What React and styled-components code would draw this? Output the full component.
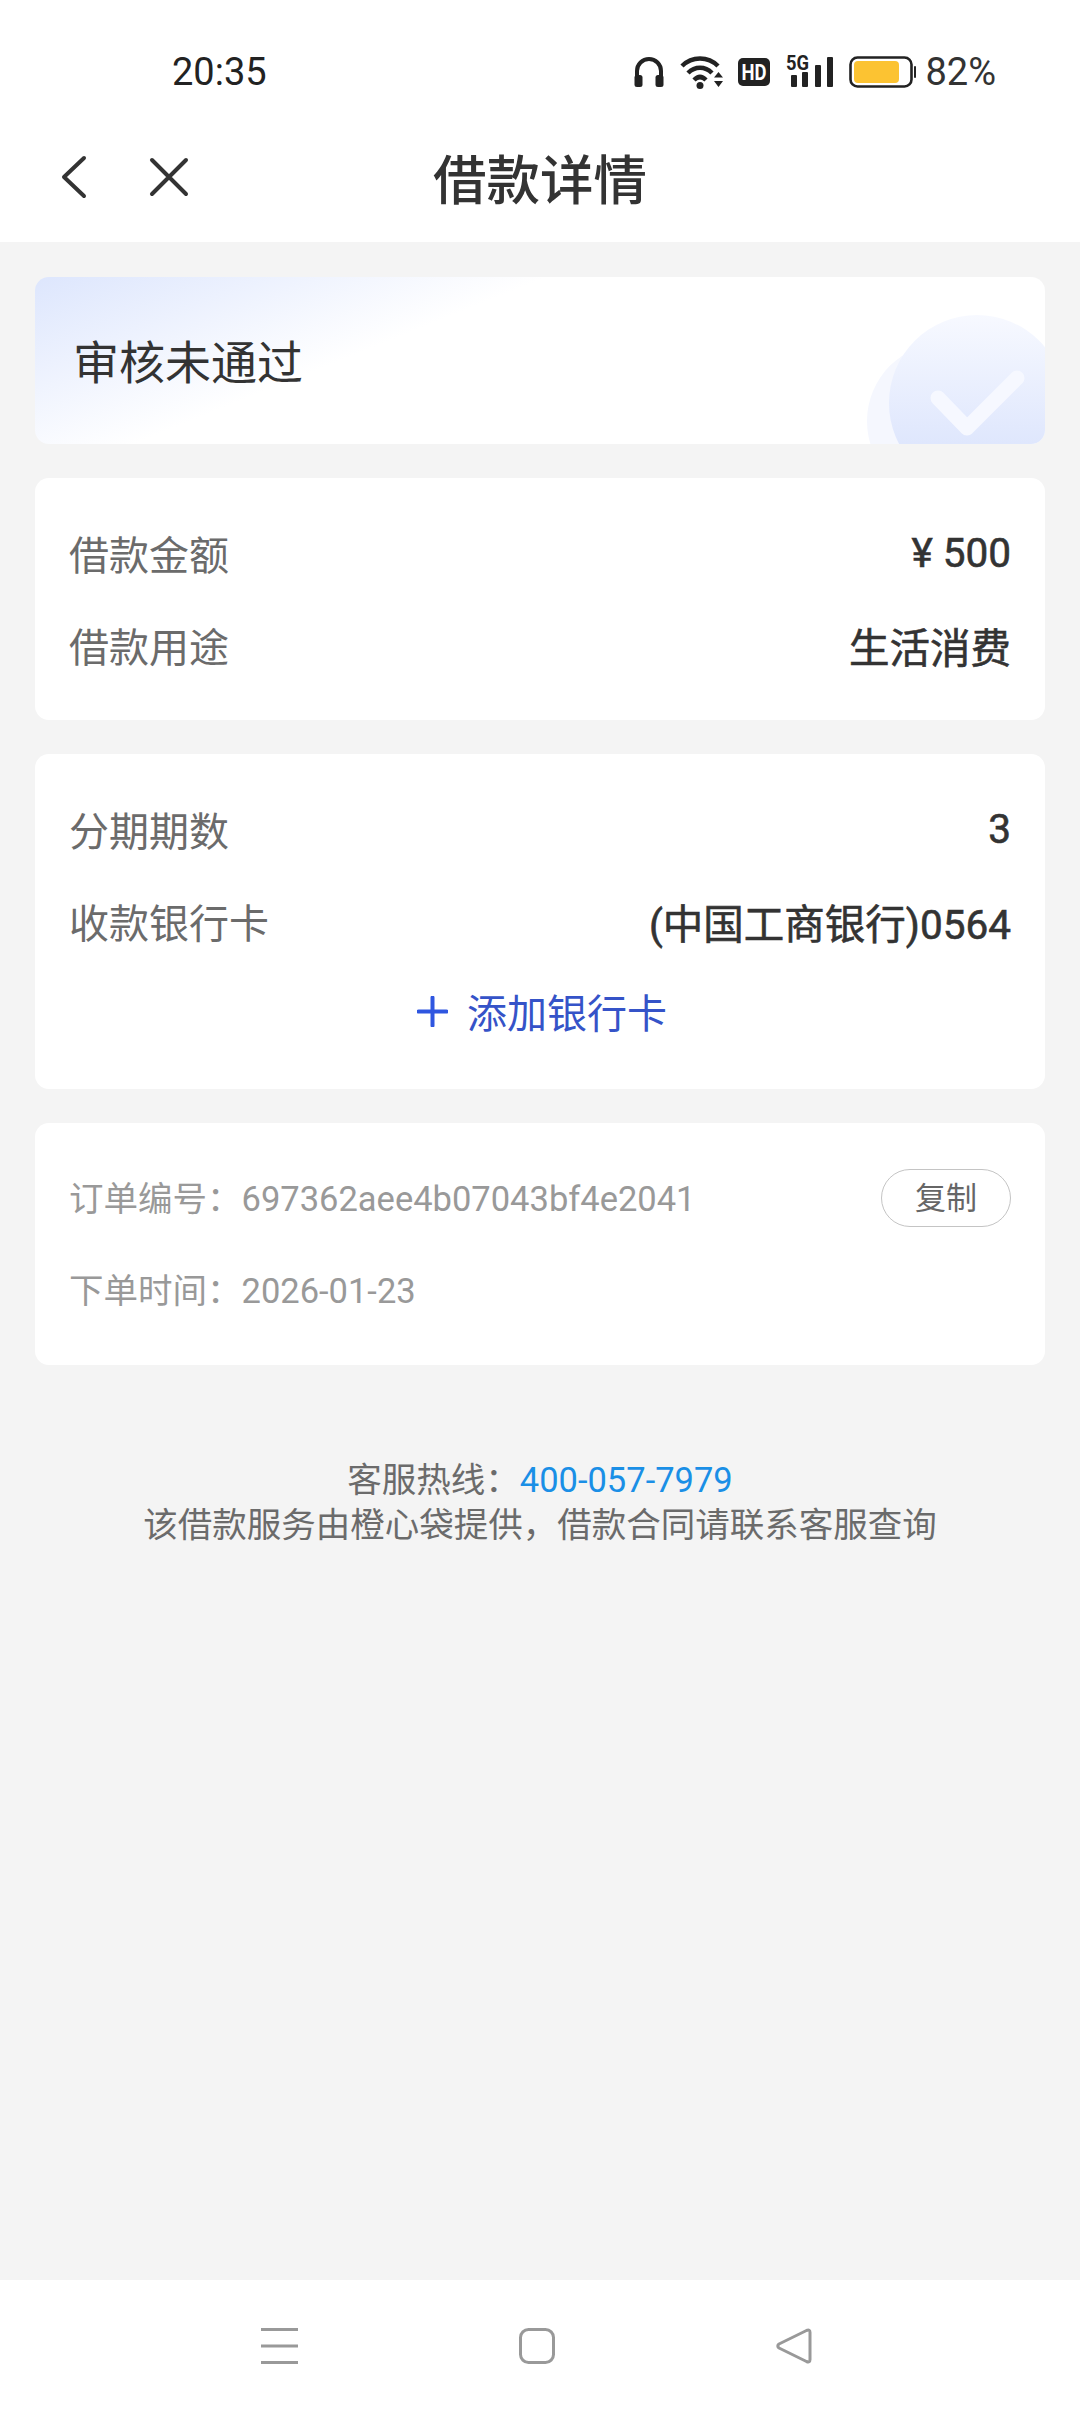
import styled, { createGlobalStyle } from 'styled-components';

const GlobalStyle = createGlobalStyle`
  html, body {
    margin: 0;
    padding: 0;
    background: #f4f4f4;
  }
  * {
    box-sizing: border-box;
  }
`;

const fontStack = `Roboto, "Noto Sans CJK SC", sans-serif`;

const Page = styled.div`
  width: 1080px;
  height: 2412px;
  display: flex;
  flex-direction: column;
  background: #f4f4f4;
  font-family: ${fontStack};
  overflow: hidden;
`;

const StatusBar = styled.div`
  height: 116px;
  padding: 28px 84px 0 172px;
  display: flex;
  align-items: center;
  justify-content: space-between;
  background: #fff;
  color: #222;
`;

const Time = styled.span`
  font-size: 38px;
  font-weight: 400;
`;

const StatusIcons = styled.div`
  display: flex;
  align-items: center;
  gap: 14px;
`;

const Percent = styled.span`
  margin-left: -5px;
  font-size: 38px;
  color: #333;
`;

const NavBar = styled.div`
  height: 126px;
  padding: 0 0 4px 0;
  display: grid;
  grid-template-columns: 1fr auto 1fr;
  align-items: center;
  background: #fff;
`;

const NavActions = styled.div`
  display: flex;
  align-items: center;
  gap: 62px;
  padding-left: 60px;
`;

const Title = styled.div`
  padding-bottom: 2px;
  font-size: 53.5px;
  font-weight: 500;
  color: #333;
`;

const Content = styled.main`
  flex: 1;
  padding: 35px 35px 0;
  display: flex;
  flex-direction: column;
  gap: 34px;
`;

const Banner = styled.section`
  position: relative;
  height: 167px;
  padding: 0 0 3px 38px;
  display: flex;
  align-items: center;
  border-radius: 14px;
  overflow: hidden;
  font-size: 46px;
  color: #333;
  background: linear-gradient(158deg, #dde6fd 0%, #ffffff 36%);
`;

const BannerArt = styled.svg`
  position: absolute;
  right: 0;
  bottom: 0;
`;

const Card = styled.section`
  padding: ${(p) => p.$padding};
  border-radius: 14px;
  background: #fff;
`;

const Row = styled.div`
  height: 92px;
  display: flex;
  align-items: center;
  justify-content: space-between;
`;

const Label = styled.span`
  padding-bottom: 6px;
  font-size: 40px;
  color: #6b6b6b;
`;

const Value = styled.span`
  padding-bottom: 6px;
  font-size: 40.5px;
  font-weight: 400;
  color: #333;
  -webkit-text-stroke: 0.6px #333;
`;

const AddCard = styled.div`
  height: 86px;
  padding: 0 0 4px 4px;
  display: flex;
  align-items: center;
  justify-content: center;
  gap: 19px;
  font-size: 40px;
  color: #3553c8;
`;

const OrderText = styled.span`
  padding-bottom: 4px;
  font-size: 34.5px;
  color: #999;
`;

const CopyButton = styled.button`
  width: 130px;
  height: 58px;
  padding: 0 0 5px;
  border: 1px solid #c4c4c4;
  border-radius: 29px;
  background: #fff;
  font-family: inherit;
  font-size: 31px;
  color: #666;
`;

const Footer = styled.div`
  margin-top: 59px;
  text-align: center;
  font-size: 34.5px;
  line-height: 45px;
  color: #6b6b6b;
`;

const Phone = styled.span`
  color: #1a8fe6;
`;

const BottomNav = styled.nav`
  height: 132px;
  padding: 48px 0 0 261px;
  display: flex;
  align-items: flex-start;
  gap: 221px;
  background: #fff;
`;

const Headphones = () => (
  <svg width="30" height="30" viewBox="0 0 30 30">
    <path d="M3 20V14a12 12 0 0 1 24 0v6" fill="none" stroke="#222" strokeWidth="4" />
    <rect x="0.5" y="18" width="8" height="12" rx="2.5" fill="#222" />
    <rect x="21.5" y="18" width="8" height="12" rx="2.5" fill="#222" />
  </svg>
);

const Wifi = () => (
  <svg width="46" height="36" viewBox="0 0 46 36">
    <g fill="none" stroke="#222" strokeWidth="4.5">
      <path d="M4 12C14 2 30 2 40 12" />
      <path d="M10 19C17 12 27 12 34 19" />
      <path d="M16 26C20 22 24 22 28 26" />
    </g>
    <circle cx="22" cy="31.5" r="3.5" fill="#222" />
    <path d="M36 23.5 40.5 18 45 23.5ZM36 27 45 27 40.5 33Z" fill="#222" />
  </svg>
);

const HdBadge = () => (
  <svg width="32" height="28" viewBox="0 0 32 28">
    <rect width="32" height="28" rx="5" fill="#222" />
    <text x="16" y="22" textAnchor="middle" fontFamily="Roboto, sans-serif" fontWeight="700" fontSize="22" textLength="25" lengthAdjust="spacingAndGlyphs" fill="#fff">
      HD
    </text>
  </svg>
);

const Signal = () => (
  <svg width="49" height="40" viewBox="0 0 49 40">
    <text x="2" y="18" fontFamily="Roboto, sans-serif" fontWeight="700" fontSize="20" textLength="23" lengthAdjust="spacingAndGlyphs" fill="#222">
      5G
    </text>
    <g fill="#222">
      <rect x="7" y="23" width="6" height="12" rx="1" />
      <rect x="18" y="20" width="6" height="15" rx="1" />
      <rect x="31" y="13" width="6" height="22" rx="1" />
      <rect x="43" y="5" width="6" height="30" rx="1" />
    </g>
  </svg>
);

const Battery = () => (
  <svg width="69" height="32" viewBox="0 0 69 32">
    <rect x="3.5" y="1.5" width="61" height="29" rx="7" fill="none" stroke="#222" strokeWidth="2.6" />
    <rect x="7" y="5" width="45" height="22" rx="4" fill="#fcc332" />
    <rect x="67" y="10" width="2" height="12" rx="1" fill="#222" />
  </svg>
);

const BackIcon = () => (
  <svg width="27" height="44" viewBox="0 0 27 44">
    <path d="M24 3 4 22 24 41" fill="none" stroke="#333" strokeWidth="4" strokeLinecap="round" strokeLinejoin="round" />
  </svg>
);

const CloseIcon = () => (
  <svg width="40" height="40" viewBox="0 0 40 40">
    <path d="M3 3 37 37M37 3 3 37" fill="none" stroke="#333" strokeWidth="4" strokeLinecap="round" />
  </svg>
);

const PlusIcon = () => (
  <svg width="31" height="31" viewBox="0 0 31 31">
    <path d="M1.5 15.5H29.5M15.5 1.5V29.5" fill="none" stroke="#2f56e0" strokeWidth="4" strokeLinecap="round" />
  </svg>
);

const MenuIcon = () => (
  <svg width="37" height="36" viewBox="0 0 37 36">
    <path d="M0 1.5H37M0 18H37M0 34.5H37" fill="none" stroke="#999" strokeWidth="3" />
  </svg>
);

const SquareIcon = () => (
  <svg width="36" height="36" viewBox="0 0 36 36">
    <rect x="1.5" y="1.5" width="33" height="33" rx="8" fill="none" stroke="#999" strokeWidth="3" />
  </svg>
);

const TriangleIcon = () => (
  <svg width="36" height="36" viewBox="0 0 36 36">
    <path d="M30.5 2.5Q34 1 34 4.5V31.5Q34 35 30.5 33.5L3 20Q0.5 18 3 16Z" fill="none" stroke="#999" strokeWidth="3" strokeLinejoin="round" />
  </svg>
);

export default function App() {
  return (
    <Page>
      <GlobalStyle />
      <StatusBar>
        <Time>20:35</Time>
        <StatusIcons>
          <Headphones />
          <Wifi />
          <HdBadge />
          <Signal />
          <Battery />
          <Percent>82%</Percent>
        </StatusIcons>
      </StatusBar>

      <NavBar>
        <NavActions>
          <BackIcon />
          <CloseIcon />
        </NavActions>
        <Title>借款详情</Title>
      </NavBar>

      <Content>
        <Banner>
          审核未通过
          <BannerArt width="200" height="167" viewBox="0 0 200 167">
            <defs>
              <linearGradient id="badge" x1="0" y1="0" x2="0" y2="1">
                <stop offset="0" stopColor="#f7f9ff" />
                <stop offset="1" stopColor="#d6e0fc" />
              </linearGradient>
            </defs>
            <circle cx="100" cy="144" r="78" fill="#f5f7fe" />
            <circle cx="132" cy="126" r="88" fill="url(#badge)" />
            <path d="M93 121 122 151 172 101" fill="none" stroke="#f6f8ff" strokeWidth="15" strokeLinecap="round" strokeLinejoin="round" />
          </BannerArt>
        </Banner>

        <Card $padding="32px 34px 26px 34px">
          <Row>
            <Label>借款金额</Label>
            <Value>¥ 500</Value>
          </Row>
          <Row>
            <Label>借款用途</Label>
            <Value>生活消费</Value>
          </Row>
        </Card>

        <Card $padding="32px 34px 33px 34px">
          <Row>
            <Label>分期期数</Label>
            <Value>3</Value>
          </Row>
          <Row>
            <Label>收款银行卡</Label>
            <Value>(中国工商银行)0564</Value>
          </Row>
          <AddCard>
            <PlusIcon />
            添加银行卡
          </AddCard>
        </Card>

        <Card $padding="29px 34px 29px 34px">
          <Row>
            <OrderText>订单编号：697362aee4b07043bf4e2041</OrderText>
            <CopyButton>复制</CopyButton>
          </Row>
          <Row>
            <OrderText>下单时间：2026-01-23</OrderText>
          </Row>
        </Card>

        <Footer>
          客服热线：<Phone>400-057-7979</Phone>
          <br />
          该借款服务由橙心袋提供，借款合同请联系客服查询
        </Footer>
      </Content>

      <BottomNav>
        <MenuIcon />
        <SquareIcon />
        <TriangleIcon />
      </BottomNav>
    </Page>
  );
}
